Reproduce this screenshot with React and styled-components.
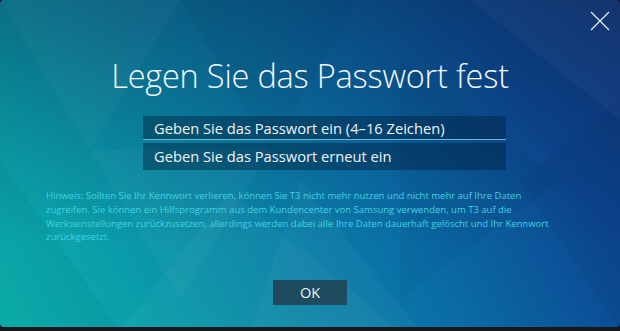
import React from "react";
import styled, { createGlobalStyle } from "styled-components";

const GlobalStyle = createGlobalStyle`
  html, body {
    margin: 0;
    padding: 0;
    background: #14181c;
    font-family: "Open Sans", "Noto Sans", sans-serif;
  }
`;

const Window = styled.div`
  position: relative;
  width: 620px;
  height: 327px;
  border-radius: 4px;
  overflow: hidden;
  background:
    linear-gradient(180deg, rgba(8, 28, 62, 0.34) 0%, rgba(8, 28, 62, 0.12) 45%, rgba(8, 28, 62, 0) 75%),
    linear-gradient(62deg, #0bb3ae 0%, #0a92a8 28%, #0a6ca6 58%, #0c4892 82%, #0e3682 100%);
`;

const Decor = styled.svg`
  position: absolute;
  inset: 0;
  width: 100%;
  height: 100%;
  pointer-events: none;
`;

const Close = styled.button`
  position: absolute;
  top: 10px;
  right: 9px;
  width: 22px;
  height: 22px;
  padding: 0;
  border: none;
  background: none;
  cursor: pointer;
  display: flex;
  align-items: center;
  justify-content: center;
`;

const Content = styled.div`
  position: relative;
  display: flex;
  flex-direction: column;
  padding: 56px 0 0 0;
`;

const Title = styled.h1`
  margin: 0;
  text-align: center;
  font-family: "Open Sans", "Noto Sans", sans-serif;
  font-weight: 300;
  font-size: 32.5px;
  line-height: 40px;
  color: #f4f8fb;
  letter-spacing: -0.2px;
`;

const Fields = styled.div`
  display: flex;
  flex-direction: column;
  gap: 3px;
  margin: 20px 0 0 143px;
  width: 363px;
`;

const Field = styled.input`
  box-sizing: border-box;
  width: 100%;
  height: ${(p) => (p.$focused ? "24px" : "27px")};
  padding: 0 11px;
  border: none;
  border-bottom: 1px solid ${(p) => (p.$focused ? "#6fb7c9" : "transparent")};
  outline: none;
  background: rgba(0, 28, 58, 0.42);
  color: #eef4f7;
  font-family: "Open Sans", "Noto Sans", sans-serif;
  font-size: 14.7px;

  &::placeholder {
    color: #eef4f7;
    opacity: 1;
  }
`;

const Hint = styled.p`
  margin: 19px 0 0 46px;
  font-family: "Open Sans", "Noto Sans", sans-serif;
  font-size: 9.5px;
  line-height: 13.8px;
  color: #42d2e2;
  white-space: nowrap;
`;

const Actions = styled.div`
  display: flex;
  justify-content: center;
  margin-top: 36px;
`;

const OkButton = styled.button`
  width: 74px;
  height: 25px;
  border: none;
  background: #1e4c5e;
  color: #eef3f5;
  font-family: "Open Sans", "Noto Sans", sans-serif;
  font-size: 14.5px;
  cursor: pointer;
`;

const triangles = [
  ["0,0 180,0 90,150", 0.03],
  ["180,0 360,0 270,150", 0.03],
  ["90,150 270,150 180,300", 0.03],
  ["0,160 120,331 0,331", 0.04],
  ["230,190 400,331 120,331", 0.03],
  ["400,60 560,180 400,300", 0.03],
  ["470,0 620,0 620,120", 0.03],
  ["520,180 620,100 620,331", 0.03],
  ["300,180 420,331 250,331", 0.03],
];

export default function App() {
  return (
    <>
      <GlobalStyle />
      <Window>
        <Decor viewBox="0 0 620 327" preserveAspectRatio="none">
          {triangles.map(([pts, o], i) => (
            <polygon key={i} points={pts} fill={i % 2 ? "#000" : "#fff"} opacity={o} />
          ))}
        </Decor>
        <Close aria-label="Schließen">
          <svg width="20" height="20" viewBox="0 0 20 20">
            <path d="M1 1 L19 19 M19 1 L1 19" stroke="#e6eef6" strokeWidth="1.2" />
          </svg>
        </Close>
        <Content>
          <Title>Legen Sie das Passwort fest</Title>
          <Fields>
            <Field $focused type="password" placeholder="Geben Sie das Passwort ein (4–16 Zeichen)" />
            <Field type="password" placeholder="Geben Sie das Passwort erneut ein" />
          </Fields>
          <Hint>
            Hinweis: Sollten Sie Ihr Kennwort verlieren, können Sie T3 nicht mehr nutzen und nicht mehr auf Ihre Daten
            <br />
            zugreifen. Sie können ein Hilfsprogramm aus dem Kundencenter von Samsung verwenden, um T3 auf die
            <br />
            Werkseinstellungen zurückzusetzen, allerdings werden dabei alle Ihre Daten dauerhaft gelöscht und Ihr Kennwort
            <br />
            zurückgesetzt.
          </Hint>
          <Actions>
            <OkButton>OK</OkButton>
          </Actions>
        </Content>
      </Window>
    </>
  );
}
